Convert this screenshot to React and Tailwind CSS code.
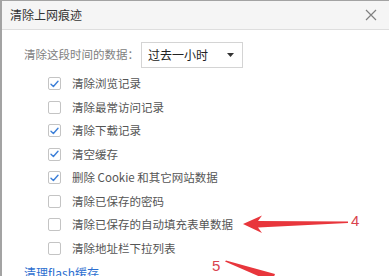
import React from "react";

const items = [
  { label: "清除浏览记录", checked: true },
  { label: "清除最常访问记录", checked: false },
  { label: "清除下载记录", checked: true },
  { label: "清空缓存", checked: true },
  { label: "删除 Cookie 和其它网站数据", checked: true },
  { label: "清除已保存的密码", checked: false },
  { label: "清除已保存的自动填充表单数据", checked: false },
  { label: "清除地址栏下拉列表", checked: false },
];

function Box({ checked }) {
  return (
    <div className="w-[13px] h-[13px] rounded-[2px] border border-[#c4c4c4] bg-white flex items-center justify-center shrink-0">
      {checked && (
        <svg width="9" height="8" viewBox="0 0 9 8">
          <path d="M1 4.2 L3.4 6.5 L8 1.2" fill="none" stroke="#3c7fd8" strokeWidth="1.4" strokeLinecap="round" strokeLinejoin="round" />
        </svg>
      )}
    </div>
  );
}

export default function App() {
  return (
    <div
      className="relative w-[389px] h-[276px] overflow-hidden bg-white border-l-2 border-t border-[#a3a3a3]"
      style={{ fontFamily: '"Noto Sans CJK SC", "Noto Sans", sans-serif' }}
    >
      <div className="h-[29px] bg-[#f5f5f5] border-b border-[#dedede] flex items-center justify-between pl-[8px] pr-[12px]">
        <span className="text-[12px] text-[#333] leading-none">清除上网痕迹</span>
        <svg width="12" height="12" viewBox="0 0 12 12">
          <path d="M1 1 L11 11 M11 1 L1 11" stroke="#808080" strokeWidth="1.2" />
        </svg>
      </div>
      <div className="pl-[22px] pt-[12px]">
        <div className="flex items-center h-[26px]">
          <span className="text-[11.5px] text-[#808080] w-[117px] leading-none">清除这段时间的数据：</span>
          <div className="w-[102px] h-[26px] border border-[#d4d4d4] flex items-center justify-between pl-[6px] pr-[8px]">
            <span className="text-[12px] text-[#222] leading-none">过去一小时</span>
            <svg width="7" height="4" viewBox="0 0 7 4">
              <path d="M0 0 L7 0 L3.5 4 Z" fill="#333" />
            </svg>
          </div>
        </div>
        <div className="flex flex-col pl-[24px] mt-[4px]">
          {items.map((it) => (
            <div key={it.label} className="h-[23.5px] flex items-center gap-[11px]">
              <Box checked={it.checked} />
              <span className="text-[11.5px] text-[#555] leading-none whitespace-nowrap">{it.label}</span>
            </div>
          ))}
        </div>
        <div className="mt-[7px] text-[12px] text-[#2d6fd0] leading-none">清理flash缓存</div>
      </div>

      <svg className="absolute pointer-events-none" width="389" height="276" viewBox="0 0 389 276" style={{ left: -2, top: -1 }}>
        <path d="M243 224 L262 215.5 L258 221 L348 221.5 L348 223 L258 227.5 L262 233 Z" fill="#e8363c" />
        <text x="351" y="226" fontSize="15" fill="#d9434e" fontFamily='"Liberation Sans", sans-serif'>4</text>
        <text x="212" y="271" fontSize="15" fill="#d9434e" fontFamily='"Liberation Sans", sans-serif'>5</text>
        <path d="M225 261.5 L226 260.5 L275 274 L272 282 Z" fill="#e8363c" />
      </svg>
    </div>
  );
}
